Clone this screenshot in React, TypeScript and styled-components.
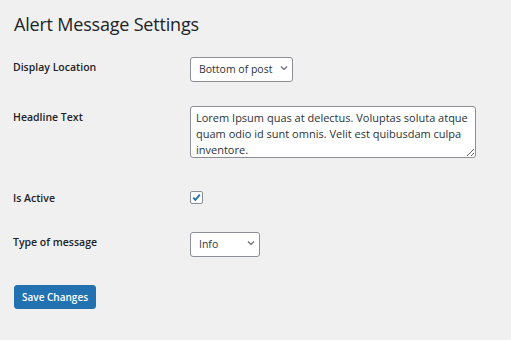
import { useState } from "react";
import styled, { createGlobalStyle } from "styled-components";

const GlobalStyle = createGlobalStyle`
    html, body {
        margin: 0;
        padding: 0;
        background: #f0f0f1;
    }
    body {
        font-family: "Open Sans", "Noto Sans", sans-serif;
        color: #1d2327;
    }
`;

const Wrap = styled.div`
    padding: 0 13px;
    width: 511px;
    height: 340px;
    box-sizing: border-box;
`;

const Title = styled.h1`
    margin: 0;
    padding: 12px 0 0 1px;
    font-size: 18px;
    font-weight: 400;
    line-height: 24px;
    letter-spacing: -0.2px;
`;

const Form = styled.form`
    margin-top: 8px;
`;

// 행마다 위아래 여백이 다름
const Row = styled.div<{ $pt: number; $pb: number }>`
    display: grid;
    grid-template-columns: 177px 1fr;
    align-items: start;
    padding-top: ${(p) => p.$pt}px;
    padding-bottom: ${(p) => p.$pb}px;
`;

const Label = styled.label<{ $top?: number }>`
    padding-top: ${(p) => p.$top ?? 4}px;
    font-size: 10.5px;
    font-weight: 600;
    line-height: 14px;
`;

const SelectBox = styled.div<{ $w: number }>`
    position: relative;
    width: ${(p) => p.$w}px;
`;

const Select = styled.select`
    appearance: none;
    width: 100%;
    height: 25px;
    margin: 0;
    padding: 0 16px 0 8px;
    border: 1px solid #8c8f94;
    border-radius: 3px;
    background: #fff;
    color: #2c3338;
    font-family: "Open Sans", "Noto Sans", sans-serif;
    font-size: 10.5px;
    line-height: 23px;
    box-sizing: border-box;
`;

const Chevron = styled.svg`
    position: absolute;
    right: 5px;
    top: 9px;
    pointer-events: none;
`;

const TextArea = styled.textarea`
    display: block;
    width: 286px;
    height: 52px;
    margin: 0;
    padding: 3px 5px;
    border: 1px solid #8c8f94;
    border-radius: 3px;
    background: #fff;
    color: #2c3338;
    font-family: "Open Sans", "Noto Sans", sans-serif;
    font-size: 11px;
    line-height: 16px;
    box-sizing: border-box;
    resize: both;
    overflow: hidden;
`;

const CheckLabel = styled.label`
    position: relative;
    display: block;
    width: 13px;
    height: 13px;
`;

const CheckInput = styled.input`
    appearance: none;
    display: block;
    width: 13px;
    height: 13px;
    margin: 0;
    border: 1px solid #8c8f94;
    border-radius: 2px;
    background: #fff;
    box-sizing: border-box;
`;

const CheckMark = styled.svg`
    position: absolute;
    left: 1px;
    top: 1px;
    pointer-events: none;
`;

const SaveButton = styled.button`
    height: 24px;
    padding: 0 7px;
    margin-left: 1px;
    border: 1px solid #2271b1;
    border-radius: 3px;
    background: #2271b1;
    color: #fff;
    font-family: "Open Sans", "Noto Sans", sans-serif;
    font-size: 10px;
    font-weight: 600;
    cursor: pointer;
`;

const ButtonRow = styled.div`
    padding-top: 4px;
`;

function ChevronIcon() {
    return (
        <Chevron width="8" height="6" viewBox="0 0 8 6">
            <path d="M1 1.5 L4 4.5 L7 1.5" fill="none" stroke="#646970" strokeWidth="1.2" />
        </Chevron>
    );
}

export default function App() {
    const [location, setLocation] = useState("bottom");
    const [headline, setHeadline] = useState(
        "Lorem Ipsum quas at delectus. Voluptas soluta atque quam odio id sunt omnis. Velit est quibusdam culpa inventore."
    );
    const [active, setActive] = useState(true);
    const [type, setType] = useState("info");

    return (
        <>
            <GlobalStyle />
            <Wrap>
                <Title>Alert Message Settings</Title>

                <Form onSubmit={(e) => e.preventDefault()}>
                    <Row $pt={12} $pb={12}>
                        <Label htmlFor="location">Display Location</Label>
                        <SelectBox $w={103}>
                            <Select id="location" value={location} onChange={(e) => setLocation(e.target.value)}>
                                <option value="top">Top of post</option>
                                <option value="bottom">Bottom of post</option>
                            </Select>
                            <ChevronIcon />
                        </SelectBox>
                    </Row>

                    <Row $pt={12} $pb={12}>
                        <Label htmlFor="headline">Headline Text</Label>
                        <TextArea id="headline" value={headline} onChange={(e) => setHeadline(e.target.value)} />
                    </Row>

                    <Row $pt={21} $pb={12}>
                        <Label $top={0}>Is Active</Label>
                        <CheckLabel>
                            <CheckInput type="checkbox" checked={active} onChange={(e) => setActive(e.target.checked)} />
                            {active && (
                                <CheckMark width="11" height="11" viewBox="0 0 11 11">
                                    <path d="M2.2 5.6 L4.4 7.9 L8.8 2.6" fill="none" stroke="#2271b1" strokeWidth="1.8" />
                                </CheckMark>
                            )}
                        </CheckLabel>
                    </Row>

                    <Row $pt={14} $pb={23}>
                        <Label htmlFor="type">Type of message</Label>
                        <SelectBox $w={70}>
                            <Select id="type" value={type} onChange={(e) => setType(e.target.value)}>
                                <option value="info">Info</option>
                                <option value="warning">Warning</option>
                                <option value="error">Error</option>
                            </Select>
                            <ChevronIcon />
                        </SelectBox>
                    </Row>

                    <ButtonRow>
                        <SaveButton type="submit">Save Changes</SaveButton>
                    </ButtonRow>
                </Form>
            </Wrap>
        </>
    );
}
